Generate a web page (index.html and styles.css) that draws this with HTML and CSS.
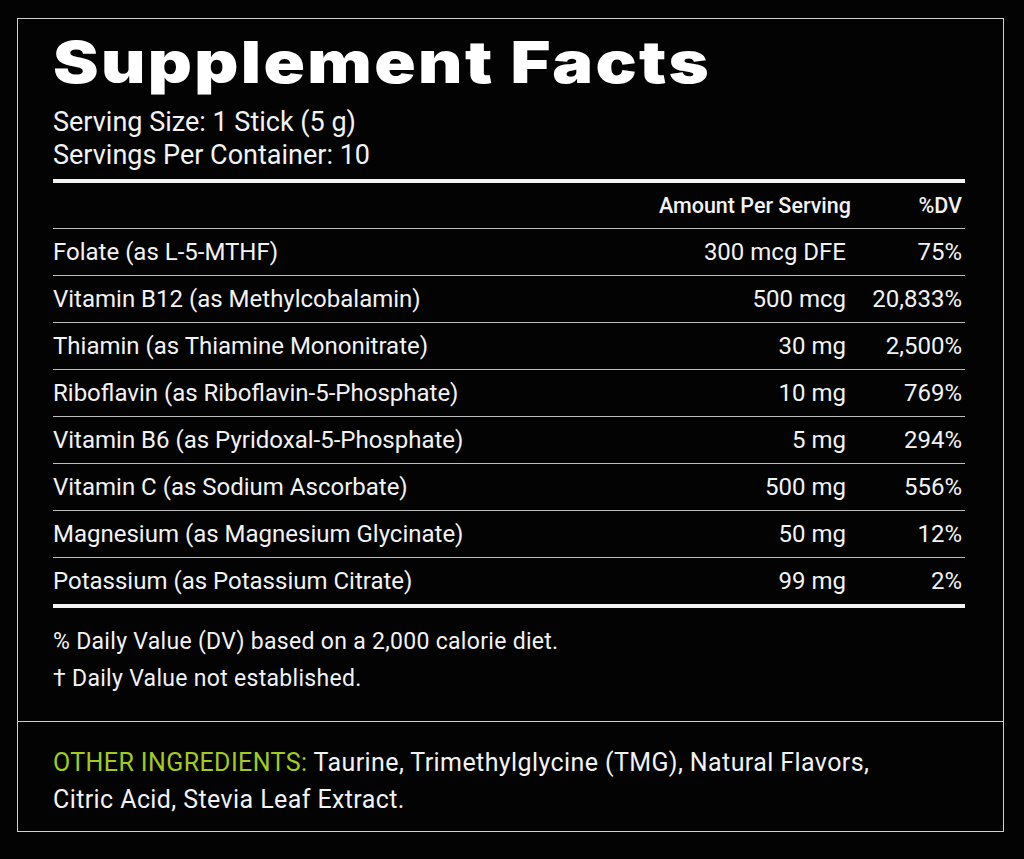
FILE: index.html
```html
<!DOCTYPE html>
<html>
<head>
<meta charset="utf-8">
<link rel="stylesheet" href="styles.css">
</head>
<body>
<div class="panel">
  <div class="main">
    <h1 class="title">Supplement Facts</h1>
    <div class="serving">
      <div>Serving Size: 1 Stick (5 g)</div>
      <div>Servings Per Container: 10</div>
    </div>
    <div class="facts">
      <div class="row head">
        <span class="name"></span>
        <span class="amt">Amount Per Serving</span>
        <span class="dv">%DV</span>
      </div>
      <div class="row"><span class="name">Folate (as L-5-MTHF)</span><span class="amt">300 mcg DFE</span><span class="dv">75%</span></div>
      <div class="row"><span class="name">Vitamin B12 (as Methylcobalamin)</span><span class="amt">500 mcg</span><span class="dv">20,833%</span></div>
      <div class="row"><span class="name">Thiamin (as Thiamine Mononitrate)</span><span class="amt">30 mg</span><span class="dv">2,500%</span></div>
      <div class="row"><span class="name">Riboflavin (as Riboflavin-5-Phosphate)</span><span class="amt">10 mg</span><span class="dv">769%</span></div>
      <div class="row"><span class="name">Vitamin B6 (as Pyridoxal-5-Phosphate)</span><span class="amt">5 mg</span><span class="dv">294%</span></div>
      <div class="row"><span class="name">Vitamin C (as Sodium Ascorbate)</span><span class="amt">500 mg</span><span class="dv">556%</span></div>
      <div class="row"><span class="name">Magnesium (as Magnesium Glycinate)</span><span class="amt">50 mg</span><span class="dv">12%</span></div>
      <div class="row last"><span class="name">Potassium (as Potassium Citrate)</span><span class="amt">99 mg</span><span class="dv">2%</span></div>
    </div>
    <div class="notes">
      <p>% Daily Value (DV) based on a 2,000 calorie diet.</p>
      <p>† Daily Value not established.</p>
    </div>
  </div>
  <div class="other">
    <p><span class="label">OTHER INGREDIENTS:</span> Taurine, Trimethylglycine (TMG), Natural Flavors,<br>Citric Acid, Stevia Leaf Extract.</p>
  </div>
</div>
</body>
</html>
```
FILE: styles.css
```css
html, body {
  margin: 0;
  padding: 0;
  background: #030303;
}
body {
  width: 1024px;
  height: 859px;
  overflow: hidden;
  font-family: Roboto, "Liberation Sans", sans-serif;
  color: #f2f2f2;
}
.panel {
  margin: 18px 0 0 17px;
  width: 987px;
  height: 814px;
  box-sizing: border-box;
  border: 1.5px solid #cfcfcf;
  display: flex;
  flex-direction: column;
}
.main {
  padding: 0 38px 0 35px;
  height: 702px;
  border-bottom: 1.5px solid #cfcfcf;
}
.title {
  width: fit-content;
  margin: 5px 0 0 0;
  font-family: Inter, "Liberation Sans", sans-serif;
  font-weight: 900;
  font-size: 58px;
  line-height: 76px;
  letter-spacing: 2px;
  color: #fff;
  transform: scaleX(1.18);
  transform-origin: 0 50%;
  white-space: nowrap;
}
.serving {
  font-size: 27px;
  line-height: 33px;
  margin-top: 6px;
}
.facts {
  margin-top: 7px;
  border-top: 4px solid #f4f4f4;
  border-bottom: 4px solid #f4f4f4;
}
.row {
  display: flex;
  align-items: center;
  height: 46px;
  border-bottom: 1px solid #bdbdbd;
  font-size: 24px;
}
.row.last {
  border-bottom: none;
}
.row .name {
  flex: 1;
}
.row .amt {
  width: 300px;
  text-align: right;
}
.row .dv {
  width: 116px;
  text-align: right;
  padding-right: 3px;
}
.row.head {
  font-weight: 500;
  font-size: 21.5px;
  height: 45px;
}
.row.head .amt {
  margin-right: -5px;
}
.notes {
  margin-top: 15px;
  font-size: 23px;
  letter-spacing: 0.3px;
}
.notes p {
  margin: 0;
  line-height: 37px;
}
.other {
  padding: 22px 35px 0 35px;
  font-size: 25px;
  letter-spacing: 0.4px;
}
.other p {
  margin: 0;
  line-height: 37px;
}
.label {
  color: #a0cc1c;
}
```
